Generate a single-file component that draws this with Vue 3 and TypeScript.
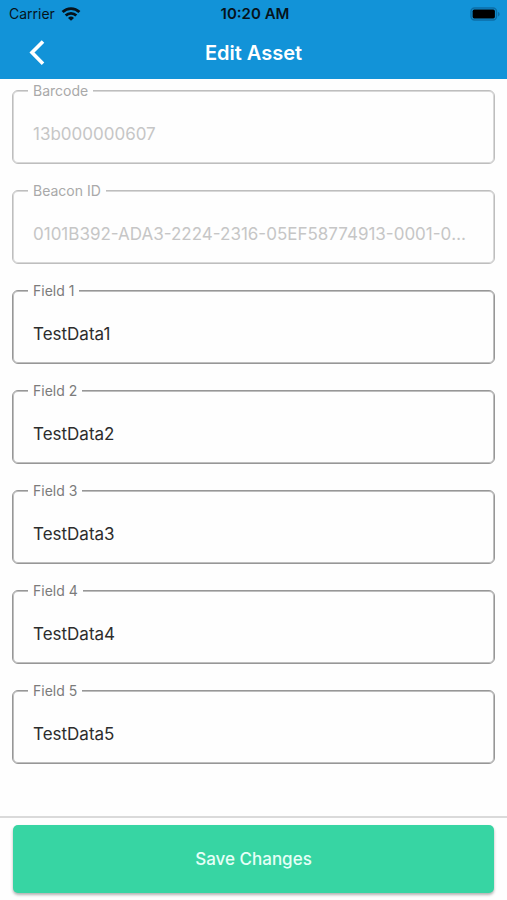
<script setup lang="ts">
import { ref } from 'vue'

interface AssetField {
  id: string
  label: string
  value: string
  disabled?: boolean
}

const fields = ref<AssetField[]>([
  { id: 'barcode', label: 'Barcode', value: '13b000000607', disabled: true },
  { id: 'beacon', label: 'Beacon ID', value: '0101B392-ADA3-2224-2316-05EF58774913-0001-000001', disabled: true },
  { id: 'field1', label: 'Field 1', value: 'TestData1' },
  { id: 'field2', label: 'Field 2', value: 'TestData2' },
  { id: 'field3', label: 'Field 3', value: 'TestData3' },
  { id: 'field4', label: 'Field 4', value: 'TestData4' },
  { id: 'field5', label: 'Field 5', value: 'TestData5' },
])
</script>

<template>
  <form class="screen" @submit.prevent>
    <header class="top">
      <div class="status">
        <div class="carrier">
          <span>Carrier</span>
          <svg width="20" height="14" viewBox="0 0 20 14" aria-hidden="true">
            <g fill="none" stroke="#06131b" stroke-width="2.8">
              <path d="M1.6 5.1a11.9 11.9 0 0 1 16.8 0" />
              <path d="M4.7 8.6a7.5 7.5 0 0 1 10.6 0" />
            </g>
            <path d="M10 13.8 7 10.9a4.3 4.3 0 0 1 6 0z" fill="#06131b" />
          </svg>
        </div>
        <span class="clock">10:20 AM</span>
        <svg class="battery" width="31" height="14" viewBox="0 0 31 14" aria-hidden="true">
          <rect x="1" y="1" width="25.5" height="12" rx="3.5" fill="none" stroke="#0c6ea6" stroke-width="1.4" />
          <rect x="2.6" y="2.6" width="22.3" height="8.8" rx="1.6" fill="#000" />
          <path d="M28 5v4.4c1-.3 1.6-1.2 1.6-2.2S29 5.3 28 5z" fill="#0c6ea6" />
        </svg>
      </div>
      <div class="nav">
        <button class="back" type="button" aria-label="Back">
          <svg width="16" height="26" viewBox="0 0 16 26" aria-hidden="true">
            <path d="M14 1.5 3 12.5l11 11.2" fill="none" stroke="#fff" stroke-width="3.6" />
          </svg>
        </button>
        <h1>Edit Asset</h1>
      </div>
    </header>

    <main class="fields">
      <div v-for="f in fields" :key="f.id" class="field" :class="{ disabled: f.disabled }">
        <label :for="f.id">{{ f.label }}</label>
        <input :id="f.id" v-model="f.value" type="text" :disabled="f.disabled" />
      </div>
    </main>

    <footer class="actions">
      <button class="save" type="submit">Save Changes</button>
    </footer>
  </form>
</template>

<style>
body {
  margin: 0;
  background: #fefefe;
}
</style>

<style scoped>
.screen {
  display: flex;
  flex-direction: column;
  min-height: 100vh;
  font-family: Inter, "Liberation Sans", sans-serif;
}
.top {
  background: #1293d8;
}
.status {
  display: grid;
  grid-template-columns: 1fr auto 1fr;
  align-items: center;
  height: 27px;
  padding: 0 6px 0 9px;
  color: #06131b;
  font-size: 14px;
}
.carrier {
  display: flex;
  align-items: center;
  gap: 6px;
}
.clock {
  font-size: 15px;
  font-weight: 600;
}
.battery {
  justify-self: end;
}
.nav {
  display: grid;
  grid-template-columns: 1fr auto 1fr;
  align-items: center;
  height: 52px;
}
.back {
  justify-self: start;
  display: flex;
  margin-left: 21px;
  padding: 8px;
  border: 0;
  background: none;
}
h1 {
  grid-column: 2;
  margin: 0;
  color: #fff;
  font-size: 20px;
  font-weight: 600;
}
.fields {
  flex: 1;
  display: flex;
  flex-direction: column;
  gap: 26px;
  padding: 11px 12px 26px;
}
.field {
  position: relative;
  display: flex;
  box-sizing: border-box;
  height: 74px;
  padding: 14px 25px 0 20px;
  border: 1px solid #979797;
  border-radius: 6px;
  box-shadow: inset 0 0 0 1px #bebebe;
}
.field label {
  position: absolute;
  top: -10px;
  left: 15px;
  padding: 0 5px;
  background: #fefefe;
  color: #7b7b7b;
  font-size: 14px;
  line-height: 20px;
}
.field input {
  flex: 1;
  min-width: 0;
  padding: 0;
  border: 0;
  outline: 0;
  background: none;
  color: #2c2c2c;
  font: inherit;
  font-size: 17px;
  text-overflow: ellipsis;
}
.field.disabled {
  border-color: #bebebe;
  box-shadow: inset 0 0 0 1px #d8d8d8;
}
.field.disabled label {
  color: #a9a9a9;
}
.field.disabled input {
  color: #c6c6c6;
}
.actions {
  display: flex;
  padding: 7px 13px;
  border-top: 2px solid #dadada;
}
.save {
  flex: 1;
  height: 68px;
  border: 0;
  border-radius: 5px;
  background: #37d5a3;
  box-shadow: 0 2px 3px rgba(0, 0, 0, 0.3);
  color: #e6fff7;
  font: inherit;
  font-size: 17px;
  font-weight: 500;
}
</style>
